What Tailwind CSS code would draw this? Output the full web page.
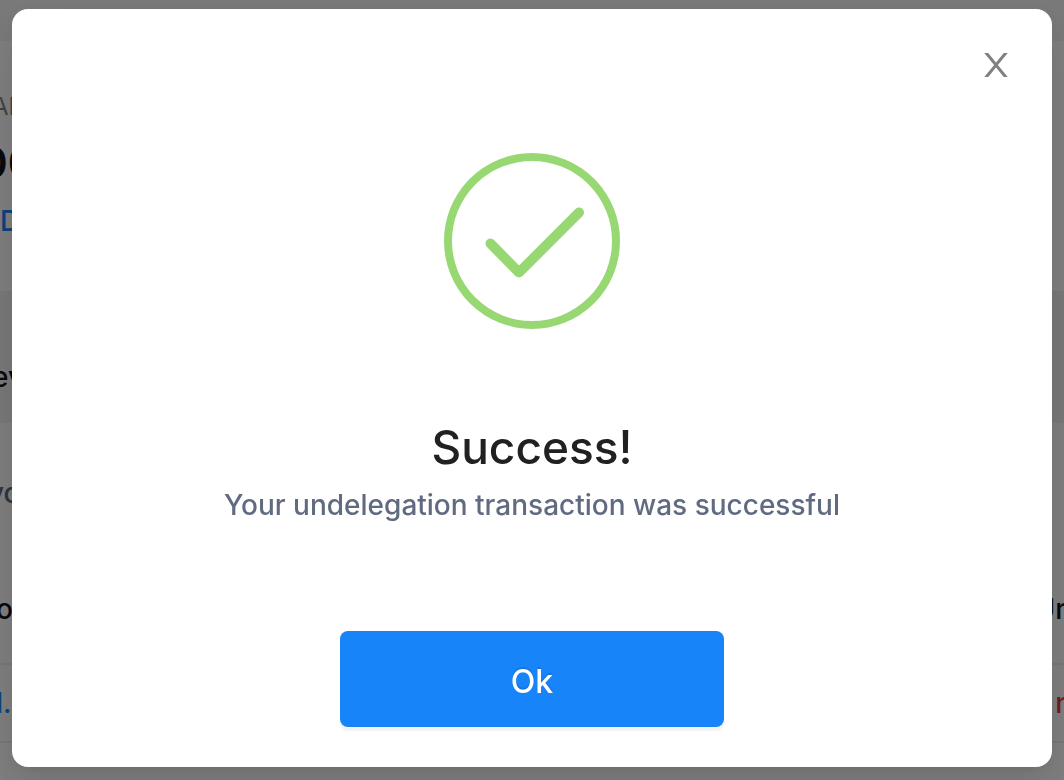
<!DOCTYPE html>
<html lang="en">
<head>
<meta charset="utf-8">
<meta name="viewport" content="width=device-width, initial-scale=1">
<title>Success</title>
<script src="https://cdn.jsdelivr.net/npm/@tailwindcss/browser@4"></script>
</head>
<body class="min-h-screen overflow-hidden bg-[#f5f5f5] font-['Inter','Liberation_Sans',sans-serif] text-[28px] leading-8 font-medium">
  <!-- Page behind the dialog -->
  <main class="flex h-screen flex-col overflow-hidden text-[#10131c]" aria-hidden="true">
    <div class="h-[41px] shrink-0"></div>
    <section class="flex h-[250px] shrink-0 flex-col bg-white pt-[50px] whitespace-nowrap">
      <p class="-ml-2 text-2xl leading-8 font-normal text-[#868686]">AL</p>
      <p class="-ml-5 pt-4 text-[42px] leading-12 font-semibold">00</p>
      <p class="pt-[18px] text-[#1784f9]">D</p>
    </section>
    <section class="flex h-[132px] shrink-0 items-center bg-[#f2f2f2] pt-10">
      <p class="-ml-2">ev</p>
    </section>
    <section class="grow bg-white">
      <p class="-ml-3 pt-[54px] text-[#606a80]">yo</p>
      <div class="mt-[84px] flex justify-between border-b-2 border-[#f0f0f0] pb-[38px]"><span class="-ml-1">o</span><span class="-mr-2">Un</span></div>
      <div class="flex justify-between border-b-2 border-[#f0f0f0] pt-[22px] pb-[22px]"><span class="-ml-1 text-[#1784f9]">l.</span><span class="-mr-2 font-medium text-[#e5383f]">n</span></div>
    </section>
  </main>

  <!-- Dialog -->
  <div class="fixed inset-0 flex items-start bg-black/50 px-3 pt-[9px]">
    <div role="dialog" aria-modal="true" aria-labelledby="title" class="flex w-full flex-col items-center rounded-2xl bg-white px-10 pt-10 pb-10 shadow-[0_6px_12px_-8px_rgba(0,0,0,0.12),0_12px_32px_rgba(0,0,0,0.08),0_18px_56px_16px_rgba(0,0,0,0.05)]">
      <button type="button" aria-label="Close" class="self-end p-1 text-[#808080]">
        <svg class="block size-6" viewBox="0 0 24 24" fill="currentColor"><path d="M0.3 0H4.2L12 9.5L19.8 0H23.7L13.9 12L23.7 24H19.8L12 14.5L4.2 24H0.3L10.1 12Z"/></svg>
      </button>
      <svg class="mt-[72px] size-44" viewBox="0 0 176 176" fill="none" stroke="#97d873" aria-hidden="true">
        <circle cx="88" cy="88" r="84" stroke-width="8"/>
        <path d="M46.5 90.5L75 119.5L135 59.5" stroke-width="10" stroke-linecap="round" stroke-linejoin="round"/>
      </svg>
      <h1 id="title" class="mt-[90px] text-[46px] leading-14 font-medium text-[#212121]">Success!</h1>
      <p class="mt-[14px] text-center leading-8 text-[#606a80]">Your undelegation transaction was successful</p>
      <button type="button" class="mt-[110px] h-24 w-96 rounded-lg bg-[#1784f9] pt-1.5 text-[32px] leading-10 font-medium text-white shadow-[0_4px_0_rgba(0,0,0,0.045)] [text-shadow:0_-2px_0_rgba(0,0,0,0.12)]">Ok</button>
    </div>
  </div>
</body>
</html>
